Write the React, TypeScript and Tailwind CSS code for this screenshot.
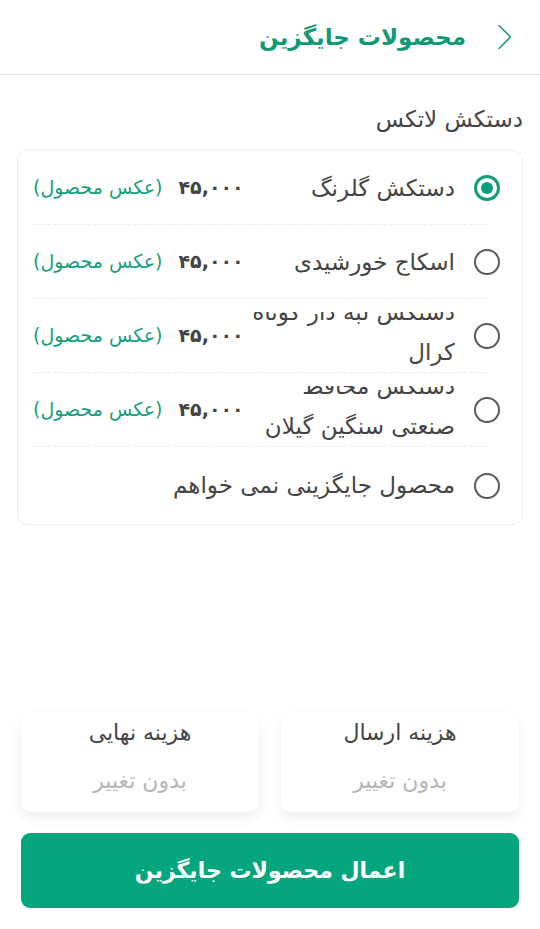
import React from "react";

const items: { lines: string[]; selected: boolean }[] = [
  { lines: ["دستکش گلرنگ"], selected: true },
  { lines: ["اسکاج خورشیدی"], selected: false },
  { lines: ["دستکش لبه دار کوتاه", "کرال"], selected: false },
  { lines: ["دستکش محافظ", "صنعتی سنگین  گیلان"], selected: false },
];

function Radio({ selected }: { selected: boolean }) {
  return selected ? (
    <div className="w-[26px] h-[26px] rounded-full border-[3px] border-[#0f9e78] flex items-center justify-center shrink-0">
      <div className="w-[12px] h-[12px] rounded-full bg-[#0f9e78]" />
    </div>
  ) : (
    <div className="w-[26px] h-[26px] rounded-full border-[2px] border-[#5a5a5a] shrink-0" />
  );
}

function Separator() {
  return <div className="ml-[15px] mr-[35px] border-t border-dashed border-[#ebebeb]" />;
}

export default function App() {
  return (
    <div
      dir="rtl"
      className="w-[540px] h-[929px] bg-white flex flex-col font-['DejaVu_Sans',sans-serif] text-[#424242]"
    >
      <header className="h-[75px] shrink-0 border-b border-[#e2e2e2] flex items-center pr-[27px] gap-[31px]">
        <svg width="16" height="26" viewBox="0 0 16 26" fill="none" className="shrink-0">
          <path d="M2 1.5 L13.5 13 L2 24.5" stroke="#1a9e7a" strokeWidth="1.6" strokeLinecap="round" strokeLinejoin="round" />
        </svg>
        <h1 className="text-[23px] font-bold text-[#0f9a76] leading-none">محصولات جایگزین</h1>
      </header>

      <div className="pr-[17px] mt-[28px] text-[23px] leading-[32px] text-[#444]">دستکش لاتکس</div>

      <div className="mx-[17px] mt-[15px] rounded-[10px] border border-[#eeeeee] bg-white">
        {items.map((it, i) => (
          <React.Fragment key={i}>
            <div className="h-[73px] flex items-center pr-[22px] pl-[15px]">
              <Radio selected={it.selected} />
              {it.lines.length > 1 ? (
                <div className="mr-[19px] self-end h-[60px] overflow-hidden flex flex-col justify-end">
                  {it.lines.map((l, j) => (
                    <div key={j} className="text-[23px] leading-[40px] whitespace-nowrap text-[#444]">
                      {l}
                    </div>
                  ))}
                </div>
              ) : (
                <div className="mr-[19px] text-[23px] leading-[40px] whitespace-nowrap text-[#444]">{it.lines[0]}</div>
              )}
              <div className="mr-auto flex items-center gap-[16px]">
                <span className="text-[19px] font-bold text-[#444]">۴۵,۰۰۰</span>
                <span className="text-[19px] text-[#13a07a]">(عکس محصول)</span>
              </div>
            </div>
            <Separator />
          </React.Fragment>
        ))}
        <div className="h-[77px] flex items-center pr-[22px] pl-[15px]">
          <Radio selected={false} />
          <div className="mr-[19px] text-[23px] whitespace-nowrap text-[#444]">محصول جایگزینی نمی خواهم</div>
        </div>
      </div>

      <div className="flex-1" />

      <div className="px-[21px] flex gap-[22px]">
        {["هزینه ارسال", "هزینه نهایی"].map((t) => (
          <div
            key={t}
            className="flex-1 h-[100px] rounded-[10px] bg-white shadow-[0_6px_14px_rgba(0,0,0,0.07)] flex flex-col items-center pt-[4px] gap-[14px]"
          >
            <div className="text-[22px] leading-[34px] text-[#444]">{t}</div>
            <div className="text-[22px] leading-[34px] text-[#b5b5b5]">بدون تغییر</div>
          </div>
        ))}
      </div>

      <div className="px-[21px] mt-[21px] mb-[21px]">
        <button className="w-full h-[75px] rounded-[9px] bg-[#05a67e] text-white text-[22px] font-bold flex items-center justify-center">
          اعمال محصولات جایگزین
        </button>
      </div>
    </div>
  );
}
